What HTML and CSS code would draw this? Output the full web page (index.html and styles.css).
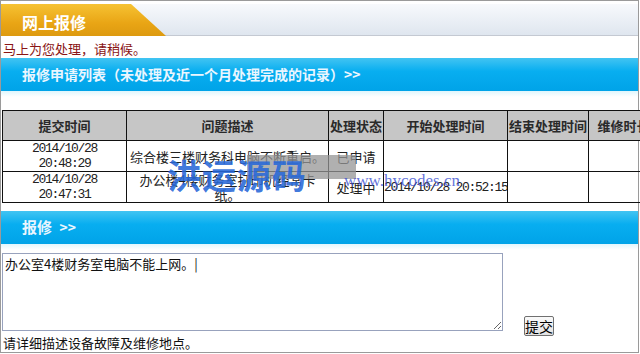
FILE: index.html
```html
<!DOCTYPE html>
<html lang="zh-CN">
<head>
  <meta charset="UTF-8" />
  <title>网上报修</title>
  <link rel="stylesheet" href="styles.css">
</head>
<body>
  <div class="page">
    <div class="title-bar">
      <div class="title-tab">网上报修</div>
    </div>
    <div class="notice">马上为您处理，请稍候。</div>

    <div class="bar">报修申请列表（未处理及近一个月处理完成的记录）&gt;&gt;</div>
    <div class="bar-fade"></div>

    <table class="list">
      <colgroup>
        <col style="width:124px">
        <col style="width:202px">
        <col style="width:55px">
        <col style="width:124px">
        <col style="width:81px">
        <col style="width:70px">
      </colgroup>
      <thead>
        <tr>
          <th>提交时间</th>
          <th>问题描述</th>
          <th>处理状态</th>
          <th>开始处理时间</th>
          <th>结束处理时间</th>
          <th>维修时长</th>
        </tr>
      </thead>
      <tbody>
        <tr>
          <td class="num">2014/10/28<br>20:48:29</td>
          <td>综合楼三楼财务科电脑不断重启。</td>
          <td>已申请</td>
          <td></td>
          <td></td>
          <td></td>
        </tr>
        <tr>
          <td class="num">2014/10/28<br>20:47:31</td>
          <td>办公楼4楼财务室打印机经常卡<br>纸。</td>
          <td>处理中</td>
          <td class="num tight">2014/10/28 20:52:15</td>
          <td></td>
          <td></td>
        </tr>
      </tbody>
    </table>

    <div class="bar bar-small">报修 <span class="arrows">&gt;&gt;</span></div>
    <div class="bar-fade"></div>

    <div class="form-row">
      <textarea id="content">办公室4楼财务室电脑不能上网。|</textarea>
      <button class="submit-btn">提交</button>
    </div>
    <div class="hint">请详细描述设备故障及维修地点。</div>

    <div class="wm-box"></div>
    <div class="wm-text">洪运源码</div>
    <div class="wm-url">www.hycodes.cn</div>
  </div>
</body>
</html>
```

FILE: styles.css
```css
* {
  box-sizing: border-box;
  margin: 0;
  padding: 0;
}

html,
body {
  overflow: hidden;
  background-color: #fff;
}

body {
  font-family: "Noto Sans CJK SC", "Liberation Sans", sans-serif;
  font-size: 13px;
  color: #111;
}

.page {
  position: relative;
  width: 639px;
  height: 353px;
  border: 1px solid #9a9a9a;
}

.title-bar {
  margin-top: 3px;
  height: 32px;
  background: linear-gradient(#f7f9fc, #dfe6ef);
  border-bottom: 1px solid #c4c9d2;
}

.title-tab {
  width: 165px;
  height: 32px;
  padding-left: 21px;
  line-height: 36px;
  font-size: 16px;
  font-weight: bold;
  color: #fff;
  background: linear-gradient(#f6c232, #e9a515 60%, #dd9a10);
  clip-path: polygon(0 0, 130px 0, 165px 100%, 0 100%);
}

.notice {
  height: 22px;
  padding: 5px 0 0 2px;
  line-height: 16px;
  font-size: 13px;
  color: #8a1414;
}

.bar {
  height: 33px;
  padding-left: 21px;
  line-height: 33px;
  font-size: 14px;
  font-weight: bold;
  color: #eaf6ff;
  background: linear-gradient(#42c4f2, #08aef0 40%, #00a3e8);
}

.bar-fade {
  height: 6px;
  background: linear-gradient(#dff6fd, #fff);
}

.bar-small {
  margin-top: 8px;
  font-size: 15px;
  line-height: 32px;
}

.bar-small .arrows {
  margin-left: 4px;
  font-size: 14px;
}

.list {
  margin: 13px 0 0 1px;
  width: 656px;
  table-layout: fixed;
  border-collapse: collapse;
}

.list th,
.list td {
  border: 1px solid #111;
  text-align: center;
  white-space: nowrap;
  overflow: hidden;
}

.list th {
  height: 30px;
  padding: 0;
  font-size: 13px;
  font-weight: bold;
  color: #2a2a2a;
  background-color: #c6c6c6;
}

.list td {
  height: 31px;
  padding: 0 1px;
  line-height: 15px;
  color: #222;
}

.list td.num {
  font-family: "Liberation Mono", monospace;
  font-size: 13px;
  letter-spacing: -1.3px;
}

.list td.tight {
  padding: 0;
  text-align: left;
}

.form-row {
  display: flex;
  align-items: flex-end;
  margin: 3px 0 0 1px;
}

.form-row textarea {
  width: 501px;
  height: 78px;
  padding: 1px 2px;
  border: 1px solid #98a2bd;
  font-family: "Noto Sans CJK SC", sans-serif;
  font-size: 13px;
  line-height: 17px;
  color: #111;
}

.submit-btn {
  width: 30px;
  height: 20px;
  margin: 0 0 -5px 21px;
  font-family: "Noto Sans CJK SC", sans-serif;
  font-size: 14px;
  line-height: 16px;
  color: #000;
  background: linear-gradient(#fafafa, #e2e2e2);
  border: 1px solid #707070;
  border-radius: 2px;
}

.hint {
  margin: 4px 0 0 2px;
  font-size: 13px;
  line-height: 16px;
  color: #111;
}

/* watermark laid over the table */
.wm-box {
  position: absolute;
  left: 246px;
  top: 154px;
  width: 109px;
  height: 24px;
  background-color: rgba(150, 150, 150, 0.75);
}

.wm-text {
  position: absolute;
  left: 166px;
  top: 154px;
  font-size: 34px;
  font-weight: bold;
  line-height: 40px;
  color: rgba(40, 104, 216, 0.9);
  letter-spacing: 1px;
}

.wm-url {
  position: absolute;
  left: 343px;
  top: 170px;
  font-family: "Liberation Serif", serif;
  font-size: 17px;
  color: rgba(60, 80, 210, 0.8);
}
```
